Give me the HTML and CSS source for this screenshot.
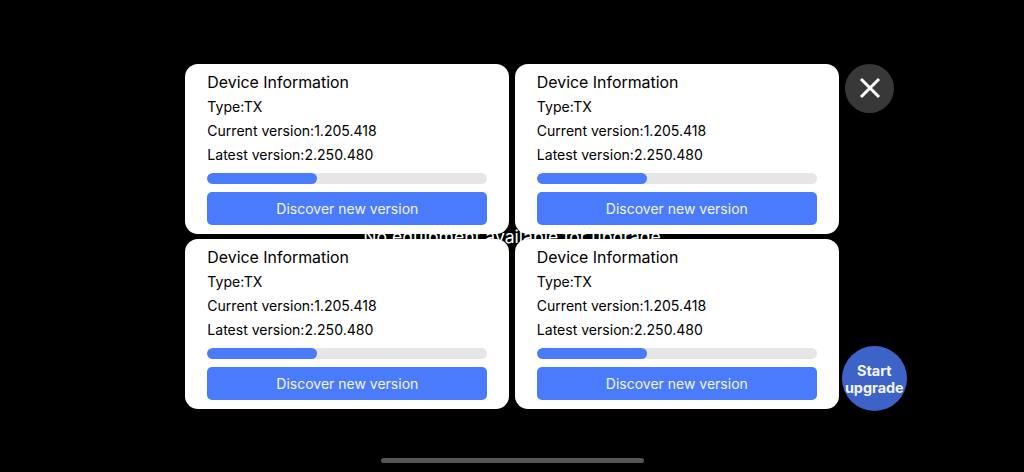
FILE: index.html
```html
<!DOCTYPE html>
<html lang="en">
<head>
    <meta charset="UTF-8">
    <meta name="viewport" content="width=device-width, initial-scale=1.0">
    <title>Device upgrade</title>
    <link rel="stylesheet" href="styles.css">
</head>
<body>
    <div class="stage">
        <div class="device-wrap">
            <p class="empty-note">No equipment available for upgrade</p>
            <div class="device-grid">
                <div class="card">
                    <h2>Device Information</h2>
                    <p>Type:TX</p>
                    <p>Current version:1.205.418</p>
                    <p>Latest version:2.250.480</p>
                    <div class="progress"><div class="progress-fill" style="width: 39.3%"></div></div>
                    <button type="button" class="discover">Discover new version</button>
                </div>
                <div class="card">
                    <h2>Device Information</h2>
                    <p>Type:TX</p>
                    <p>Current version:1.205.418</p>
                    <p>Latest version:2.250.480</p>
                    <div class="progress"><div class="progress-fill" style="width: 39.3%"></div></div>
                    <button type="button" class="discover">Discover new version</button>
                </div>
                <div class="card">
                    <h2>Device Information</h2>
                    <p>Type:TX</p>
                    <p>Current version:1.205.418</p>
                    <p>Latest version:2.250.480</p>
                    <div class="progress"><div class="progress-fill" style="width: 39.3%"></div></div>
                    <button type="button" class="discover">Discover new version</button>
                </div>
                <div class="card">
                    <h2>Device Information</h2>
                    <p>Type:TX</p>
                    <p>Current version:1.205.418</p>
                    <p>Latest version:2.250.480</p>
                    <div class="progress"><div class="progress-fill" style="width: 39.3%"></div></div>
                    <button type="button" class="discover">Discover new version</button>
                </div>
            </div>
        </div>
        <div class="side">
            <button type="button" class="close" aria-label="Close">
                <svg width="24" height="24" viewBox="0 0 24 24"><path d="M3 3L21 21M21 3L3 21" stroke="#fff" stroke-width="3" fill="none"/></svg>
            </button>
            <button type="button" class="start">Start upgrade</button>
        </div>
    </div>
    <div class="home-bar"></div>
</body>
</html>
```

FILE: styles.css
```css
html, body {
    margin: 0;
    height: 472px;
    overflow: hidden;
    background-color: #000;
}
body {
    font-family: Inter, "Liberation Sans", sans-serif;
    padding-top: 63.5px;
    box-sizing: border-box;
}
.stage {
    display: flex;
    margin-left: 185.3px;
    height: 347.5px;
}
.device-wrap {
    position: relative;
}
.empty-note {
    position: absolute;
    left: 0;
    right: 0;
    top: 162px;
    margin: 0;
    text-align: center;
    color: #fff;
    font-size: 17.6px;
    line-height: 22px;
}
.device-grid {
    position: relative;
    display: grid;
    grid-template-columns: 324px 324px;
    grid-template-rows: 170px 170px;
    gap: 5.5px;
}
.card {
    background-color: #fff;
    border-radius: 13px;
    padding: 7px 22px 0;
    color: #000;
}
.card h2 {
    margin: 0 0 1px;
    font-size: 15.9px;
    font-weight: 400;
    line-height: 23px;
}
.card p {
    margin: 0;
    font-size: 14.05px;
    line-height: 24px;
}
.progress {
    height: 11px;
    margin-top: 6px;
    background-color: #e6e6e6;
    border-radius: 6px;
    overflow: hidden;
}
.progress-fill {
    height: 100%;
    background-color: #4a7bfb;
    border-radius: 6px;
}
.discover {
    display: block;
    width: 100%;
    height: 33px;
    margin-top: 8px;
    background-color: #4a7bfb;
    color: #f2f5ff;
    border: none;
    border-radius: 5px;
    font-family: inherit;
    font-size: 14px;
}
.side {
    display: flex;
    flex-direction: column;
    justify-content: space-between;
    align-items: flex-start;
}
.close {
    display: flex;
    align-items: center;
    justify-content: center;
    width: 49px;
    height: 49px;
    margin-left: 6.5px;
    padding: 0;
    background-color: #383838;
    border: none;
    border-radius: 50%;
}
.start {
    width: 65px;
    height: 65px;
    margin-left: 3px;
    padding: 0;
    background-color: #3d63c9;
    color: #f2f5ff;
    border: none;
    border-radius: 50%;
    font-family: inherit;
    font-size: 14.4px;
    font-weight: 700;
    line-height: 17px;
}
.home-bar {
    width: 263px;
    height: 5px;
    margin: 47px auto 0;
    background-color: #555;
    border-radius: 3px;
}
```
